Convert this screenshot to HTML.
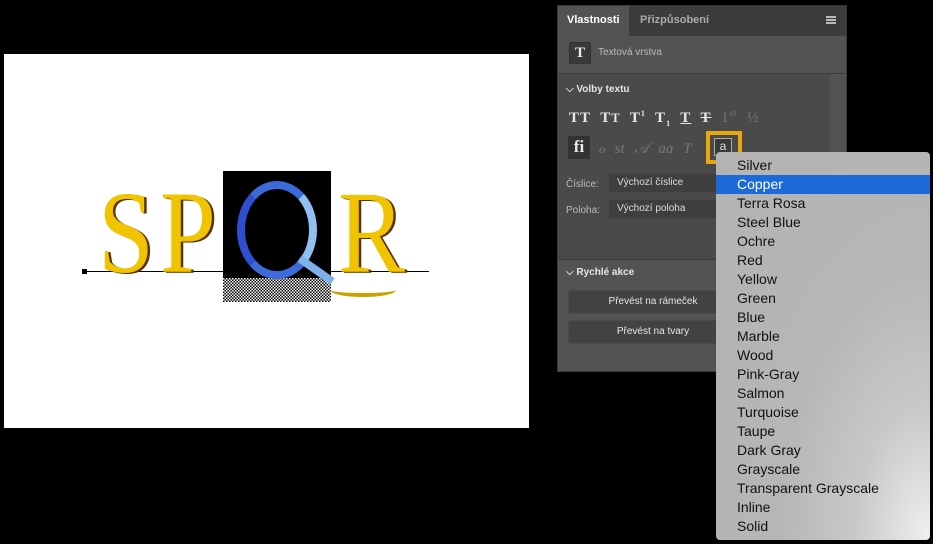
<!DOCTYPE html>
<html><head><meta charset="utf-8"><style>
*{margin:0;padding:0;box-sizing:border-box}
body{width:933px;height:544px;background:#000;position:relative;overflow:hidden;font-family:"Liberation Sans",sans-serif}
.a{position:absolute}
.canvas{left:4px;top:54px;width:525px;height:374px;background:#fff}
.ltr{font-family:"Liberation Serif",serif;font-size:118px;line-height:1;color:#f0c400;text-shadow:3px 1px 0 #5a3005;transform:scaleX(0.85);transform-origin:0 0}
.panel{left:557px;top:5px;width:290px;height:367px;background:#535353;border:1px solid #3a3a3a}
.tabs{left:0;top:0;width:288px;height:30px;background:#3c3c3c}
.tab{top:0;height:30px;line-height:28px;font-size:11px;font-weight:bold;padding:0 9px}
.t{color:#ddd;font-size:10px}
.b{color:#e6e6e6;font-size:10px;font-weight:bold}
.sel{height:20px;background:#3e3e3e;border:1px solid #474747;color:#ddd;font-size:10px;line-height:18px;padding-left:8px}
.btn{height:24px;background:#424242;border:1px solid #4b4b4b;color:#e6e6e6;font-size:10px;line-height:22px;text-align:center}
.ic{font-family:"Liberation Serif",serif;color:#e8e8e8;font-size:15px;font-weight:bold}
.menu{left:716px;top:152px;width:214px;height:388px;background:radial-gradient(ellipse at 100% 100%,#f0f0f0 0,#c8c8c8 25%,#b6b6b6 50%,#b3b3b3 100%);border-radius:4px}
.mi{left:0;width:214px;height:19px;line-height:19px;padding-left:21px;font-size:14px;color:#111}
</style></head><body>
<div class="a canvas"></div>
<div class="a" style="left:84px;top:271px;width:345px;height:1px;background:#000"></div>
<div class="a" style="left:82px;top:269px;width:5px;height:5px;background:#000"></div>
<div class="a ltr" style="left:98px;top:174px">S</div>
<div class="a ltr" style="left:160px;top:174px">P</div>
<div class="a" style="left:223px;top:171px;width:108px;height:107px;background:#000"></div>
<div class="a" style="left:223px;top:278px;width:108px;height:24px;background:repeating-conic-gradient(#000 0 25%,#fff 0 50%) 0 0/3px 3px"></div>
<div class="a" style="left:237px;top:181px;width:80px;height:98px;border:8px solid #3c6ad8;border-left-color:#2e4fd0;border-right-color:#8fc0f0;border-radius:50%"></div>
<div class="a" style="left:296px;top:266px;width:40px;height:8px;background:#7eb0ea;transform:rotate(35deg)"></div>
<div class="a" style="left:330px;top:283px;width:66px;height:14px;border-bottom:4px solid #c9a200;border-radius:0 0 50% 50%"></div>
<div class="a ltr" style="left:338px;top:174px">R</div>

<div class="a panel">
<div class="a tabs"></div>
<div class="a tab" style="left:0;background:#535353;color:#fff">Vlastnosti</div>
<div class="a tab" style="left:73px;color:#aaa">Přizpůsobení</div>
<div class="a" style="left:268px;top:10px;width:10px;height:8px;border-top:2px solid #bbb;border-bottom:2px solid #bbb"></div>
<div class="a" style="left:268px;top:13px;width:10px;height:2px;background:#bbb"></div>
<div class="a" style="left:11px;top:36px;width:22px;height:22px;background:#393939;border:1px solid #333;text-align:center;line-height:20px" ><span class="ic">T</span></div>
<div class="a t" style="left:40px;top:41px;color:#bbb">Textová vrstva</div>
<div class="a" style="left:0;top:67px;width:288px;height:1px;background:#3c3c3c"></div>
<div class="a" style="left:0;top:68px;width:272px;height:185px;background:#4a4a4a"></div>
<div class="a b" style="left:8px;top:78px">⌵ Volby textu</div>
<div class="a ic" style="left:11px;top:102px;letter-spacing:1px">TT&nbsp; T<small>T</small>&nbsp; T<sup style="font-size:8px">1</sup>&nbsp; T<sub style="font-size:8px">1</sub>&nbsp; <u>T</u>&nbsp; <s>T</s>&nbsp; <span style="color:#777;font-weight:normal">1<sup style="font-size:9px">st</sup>&nbsp; ½</span></div>
<div class="a" style="left:10px;top:130px;width:22px;height:23px;background:#333;text-align:center;line-height:21px"><span class="ic" style="font-size:17px">fi</span></div>
<div class="a ic" style="left:40px;top:133px;color:#777;font-weight:normal;font-style:italic;word-spacing:6px">ℴ st 𝒜 aa T</div>
<div class="a" style="left:148px;top:125px;width:36px;height:33px;border:4px solid #e8a90e"></div>
<div class="a" style="left:156px;top:132px;width:18px;height:18px;background:#3a3a3a;border:1px solid #aaa;color:#ddd;font-size:12px;text-align:center">a</div>
<div class="a t" style="left:8px;top:173px;color:#bbb">Číslice:</div>
<div class="a sel" style="left:50px;top:167px;width:160px">Výchozí číslice</div>
<div class="a t" style="left:8px;top:199px;color:#bbb">Poloha:</div>
<div class="a sel" style="left:50px;top:193px;width:160px">Výchozí poloha</div>
<div class="a" style="left:0;top:253px;width:288px;height:1px;background:#3c3c3c"></div>
<div class="a b" style="left:8px;top:261px">⌵ Rychlé akce</div>
<div class="a btn" style="left:10px;top:284px;width:170px">Převést na rámeček</div>
<div class="a btn" style="left:10px;top:314px;width:170px">Převést na tvary</div>
</div>

<div class="a menu">
<div class="a mi" style="top:4px">Silver</div>
<div class="a mi" style="top:23px;background:#1c6ad8;color:#fff">Copper</div>
<div class="a mi" style="top:42px">Terra Rosa</div>
<div class="a mi" style="top:61px">Steel Blue</div>
<div class="a mi" style="top:80px">Ochre</div>
<div class="a mi" style="top:99px">Red</div>
<div class="a mi" style="top:118px">Yellow</div>
<div class="a mi" style="top:137px">Green</div>
<div class="a mi" style="top:156px">Blue</div>
<div class="a mi" style="top:175px">Marble</div>
<div class="a mi" style="top:194px">Wood</div>
<div class="a mi" style="top:213px">Pink-Gray</div>
<div class="a mi" style="top:232px">Salmon</div>
<div class="a mi" style="top:251px">Turquoise</div>
<div class="a mi" style="top:270px">Taupe</div>
<div class="a mi" style="top:289px">Dark Gray</div>
<div class="a mi" style="top:308px">Grayscale</div>
<div class="a mi" style="top:327px">Transparent Grayscale</div>
<div class="a mi" style="top:346px">Inline</div>
<div class="a mi" style="top:365px">Solid</div>
</div>
</body></html>
